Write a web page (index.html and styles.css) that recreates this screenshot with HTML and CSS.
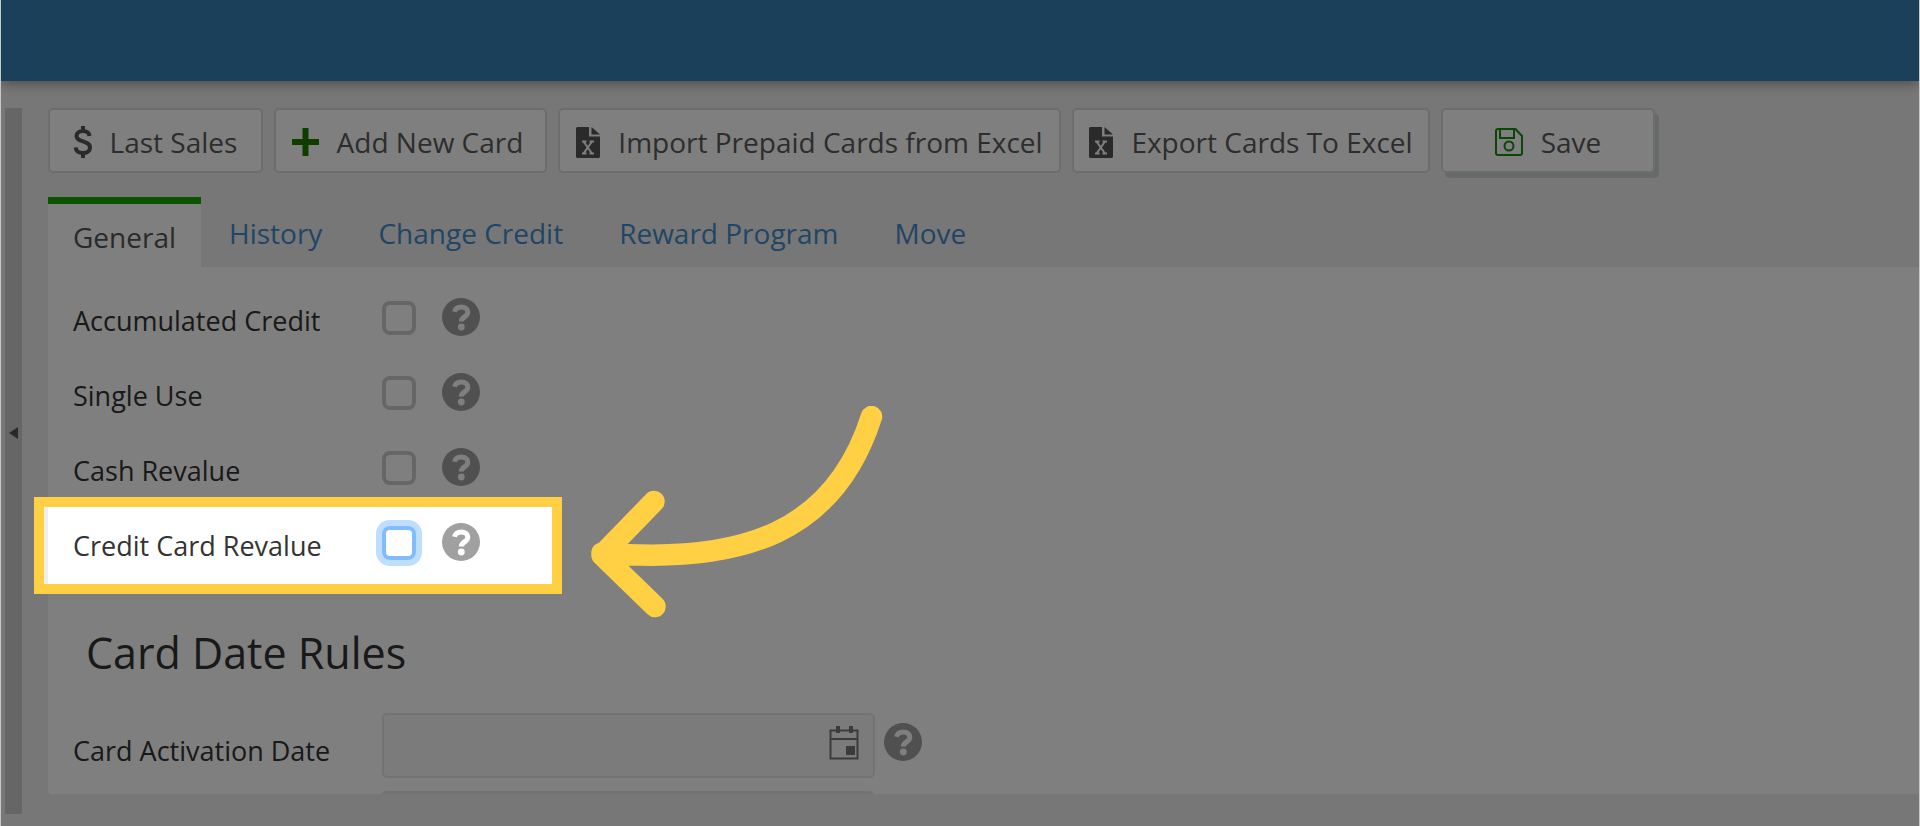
FILE: index.html
```html
<!DOCTYPE html>
<html lang="en">
<head>
<meta charset="utf-8">
<title>Prepaid Cards</title>
<link rel="stylesheet" href="styles.css">
</head>
<body>
<svg class="sprite" aria-hidden="true">
  <symbol id="help" viewBox="0 0 38 38">
    <circle cx="19" cy="19" r="19"/>
    <path d="M12.500 13.800C13.300 10.300 15.800 9 19.300 9c4 0 6.500 2 6.500 5.200 0 4.800-6.500 4.600-6.500 9.300" fill="none" stroke="#fff" stroke-width="5"/>
    <circle cx="19.300" cy="29" r="3.400" fill="#fff"/>
  </symbol>
  <symbol id="excel" viewBox="0 0 24 31">
    <path d="M1.500 0H13v9.500h11V29.500a1.500 1.500 0 0 1-1.500 1.500h-21A1.500 1.500 0 0 1 0 29.500v-28A1.500 1.500 0 0 1 1.500 0zM15.500 0l8.500 7.500h-8.500z"/>
    <path d="M7.500 14.500l8.500 12M16 14.500l-8.500 12M6 14.500h4.500M13.500 14.500H18M6 26.500h4.500M13.500 26.500H18" fill="none" stroke="#fff" stroke-width="2"/>
  </symbol>
</svg>
<div class="page">
  <header class="topbar"></header>
  <div class="workspace">
    <button class="splitter" type="button" aria-label="Collapse side panel"><svg width="9" height="12" viewBox="0 0 9 12"><path d="M9 0v12L0 6z"/></svg></button>
    <main class="content">
      <div class="toolbar">
        <button class="btn btn-sales" type="button"><svg width="18" height="32" viewBox="0 0 18 32"><path d="M15.500 10C15 6.500 12.500 5 9 5 5.200 5 2.500 6.800 2.500 10c0 7 13.500 3.700 13.500 11.500 0 3.500-3 5.500-7 5.500-4.300 0-7-1.900-7.300-5.700M9 0v5M9 27v5" fill="none" stroke="#555" stroke-width="4"/></svg>Last Sales</button>
        <button class="btn btn-add" type="button"><svg width="27" height="28" viewBox="0 0 27 28"><path d="M13.500 0v28M0 14h27" stroke="#1f7a00" stroke-width="6"/></svg>Add New Card</button>
        <button class="btn btn-import" type="button"><svg width="24" height="31"><use href="#excel"/></svg>Import Prepaid Cards from Excel</button>
        <button class="btn btn-export" type="button"><svg width="24" height="31"><use href="#excel"/></svg>Export Cards To Excel</button>
        <button class="btn btn-save" type="button"><svg width="28" height="28" viewBox="0 0 28 28"><path class="line" d="M3 1h17.500L27 8v17a2 2 0 0 1-2 2H3a2 2 0 0 1-2-2V3a2 2 0 0 1 2-2zM5 1v9h14V1"/><circle class="line" cx="14" cy="18" r="4.500"/></svg>Save</button>
      </div>
      <nav class="tabs">
        <a class="tab active" href="#general">General</a>
        <a class="tab" href="#history">History</a>
        <a class="tab" href="#credit">Change Credit</a>
        <a class="tab" href="#reward">Reward Program</a>
        <a class="tab" href="#move">Move</a>
      </nav>
      <form class="panel">
        <div class="row"><label for="acc">Accumulated Credit</label><input class="check" id="acc" type="checkbox"><svg class="help"><use href="#help"/></svg></div>
        <div class="row"><label for="single">Single Use</label><input class="check" id="single" type="checkbox"><svg class="help"><use href="#help"/></svg></div>
        <div class="row"><label for="cash">Cash Revalue</label><input class="check" id="cash" type="checkbox"><svg class="help"><use href="#help"/></svg></div>
        <div class="row"><label for="cc">Credit Card Revalue</label><input class="check focused" id="cc" type="checkbox"><svg class="help"><use href="#help"/></svg></div>
        <h2>Card Date Rules</h2>
        <div class="row date-row">
          <label for="act">Card Activation Date</label>
          <span class="date"><input class="field" id="act" type="text" readonly><svg class="calendar" width="30" height="34" viewBox="0 0 30 34"><path d="M1.500 4.500h27v28h-27zM1.500 13h27" fill="none" stroke="#777" stroke-width="2"/><path d="M7 0h4v7H7zM20 0h4v7h-4zM17 20h9v9h-9z" fill="#777"/></svg></span>
          <svg class="help"><use href="#help"/></svg>
        </div>
        <div class="next"></div>
      </form>
    </main>
  </div>
  <div class="spotlight"></div>
  <svg class="arrow" width="292" height="212" viewBox="591 405 292 212"><path d="M871.500 415.500C835 530 745 564 602 552M654 500.500L602 554l53 51.500" fill="none" stroke="#ffd043" stroke-width="21.500" stroke-linecap="round" stroke-linejoin="round"/></svg>
</div>
</body>
</html>
```
FILE: styles.css
```css
* { box-sizing: border-box; }
body {
  margin: 0;
  background: #c8c8c8;
  color: #333;
  font-family: "Open Sans", "Noto Sans", sans-serif;
  font-size: 27px;
}
.sprite { position: absolute; width: 0; height: 0; }
.page {
  position: relative;
  display: flex;
  flex-direction: column;
  min-height: 100vh;
  margin: 0 1px;
  overflow: hidden;
  background: #efefef;
}
.topbar {
  height: 81px;
  background: #3480b4;
  box-shadow: 0 2px 12px rgba(0, 0, 0, .4);
}
.workspace { display: flex; flex: 1; padding: 27px 0 12px 4px; }
.splitter {
  display: flex;
  align-items: center;
  justify-content: center;
  width: 17px;
  margin-right: 26px;
  padding: 0 0 56px;
  border: 0;
  background: #ccc;
}
.splitter svg { fill: #555; }
.content { flex: 1; min-width: 0; }
.toolbar { display: flex; gap: 11px; }
.btn {
  display: flex;
  align-items: center;
  justify-content: center;
  height: 65px;
  padding: 3px 14px 0;
  border: 2px solid #dadada;
  border-radius: 5px;
  background: #fff;
  color: #5a5a5a;
  font: inherit;
  font-size: 28px;
  white-space: nowrap;
}
.btn svg { flex: none; margin-right: 18px; fill: #555; }
.btn .line { fill: none; stroke: #178a10; stroke-width: 2px; }
.btn-sales { width: 215px; }
.btn-add { width: 273px; padding-right: 20px; }
.btn-import { width: 503px; }
.btn-export { width: 358px; }
.btn-save { width: 214px; box-shadow: 4px 5px 0 #ccd6d1; }
.tabs { display: flex; height: 94px; padding-top: 24px; }
.tab {
  padding: 17px 28px 0 28px;
  color: #428bca;
  font-size: 28px;
  text-decoration: none;
  white-space: nowrap;
}
.tab.active {
  padding: 14px 25px 0 25px;
  border-top: 7px solid #14a800;
  background: #fff;
  color: #555;
}
.panel {
  padding: 13px 0 0 25px;
  border-radius: 0 0 0 4px;
  background: #fff;
}
.row { display: flex; align-items: center; height: 75px; }
.row label { width: 309px; padding-top: 5px; white-space: nowrap; }
.check {
  appearance: none;
  width: 34px;
  height: 34px;
  margin: 0 26px 0 0;
  border: 4px solid #ccc;
  border-radius: 8px;
  background: #fff;
}
.focused { border-color: #80bdff; box-shadow: 0 0 0 6px #bfdeff; }
.help { width: 38px; height: 38px; margin-bottom: 2px; fill: #a0a0a0; }
h2 {
  margin: 43px 0 25px 13px;
  font-size: 43px;
  font-weight: 400;
  line-height: 60px;
}
.date-row label { padding-top: 9px; }
.date-row .help { margin: 0 0 8px 9px; }
.date { position: relative; width: 493px; }
.field {
  display: block;
  width: 100%;
  height: 65px;
  border: 2px solid #e6e6e6;
  border-radius: 5px;
  background: #f7f7f7;
  font: inherit;
}
.calendar { position: absolute; right: 16px; top: 13px; }
.next { width: 491px; height: 3px; margin: 8px 0 0 309px; border-radius: 4px 4px 0 0; background: #e6e6e6; }
.spotlight {
  position: absolute;
  left: 33px;
  top: 497px;
  width: 528px;
  height: 97px;
  border: 10px solid #ffd043;
  box-shadow: 0 0 0 200vmax rgba(0, 0, 0, .5);
  pointer-events: none;
}
.arrow { position: absolute; left: 590px; top: 406px; pointer-events: none; }
```
